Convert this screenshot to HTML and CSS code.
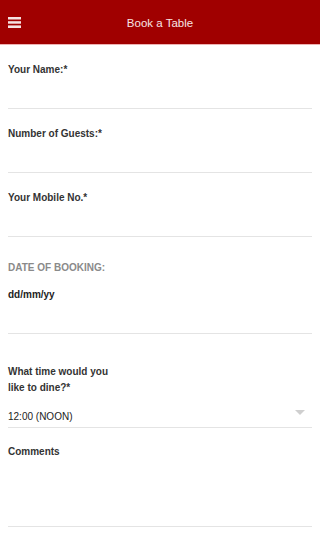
FILE: index.html
```html
<!DOCTYPE html>
<html lang="en">
<head>
<meta charset="utf-8">
<title>Book a Table</title>
<link rel="stylesheet" href="styles.css">
</head>
<body>
<header class="topbar">
  <div class="menu-cell">
    <svg class="menu-icon" width="13" height="11" viewBox="0 0 13 11" aria-hidden="true">
      <rect x="0" y="0" width="13" height="2.5" fill="#f6e2e2"/>
      <rect x="0" y="4.2" width="13" height="2.5" fill="#f6e2e2"/>
      <rect x="0" y="8.4" width="13" height="2.6" fill="#f6e2e2"/>
    </svg>
  </div>
  <h1 class="title">Book a Table</h1>
  <div class="spacer"></div>
</header>

<form class="form">
  <div class="field">
    <label class="label">Your Name:*</label>
    <div class="input"></div>
  </div>
  <div class="field">
    <label class="label">Number of Guests:*</label>
    <div class="input"></div>
  </div>
  <div class="field">
    <label class="label">Your Mobile No.*</label>
    <div class="input"></div>
  </div>
  <div class="field field-date">
    <label class="label label-muted">DATE OF BOOKING:</label>
    <div class="date-value">dd/mm/yy</div>
  </div>
  <div class="field field-time">
    <label class="label label-wrap">What time would you like to dine?*</label>
    <div class="select">
      <span class="select-text">12:00 (NOON)</span>
      <span class="caret"></span>
    </div>
  </div>
  <div class="field field-comments">
    <label class="label">Comments</label>
    <div class="textarea"></div>
  </div>
</form>
</body>
</html>
```

FILE: styles.css
```css
* {
  box-sizing: border-box;
}

html, body {
  margin: 0;
  padding: 0;
  background: #ffffff;
}

body {
  font-family: "Liberation Sans", Arial, Helvetica, sans-serif;
  color: #333333;
}

.topbar {
  display: grid;
  grid-template-columns: 1fr auto 1fr;
  align-items: center;
  height: 45px;
  background: #a00000;
  border-bottom: 1px solid #eeb2b2;
}

.menu-cell {
  display: flex;
  align-items: center;
  padding-left: 8px;
  padding-top: 1px;
}

.menu-icon {
  display: block;
}

.title {
  margin: 0;
  font-size: 11.5px;
  font-weight: normal;
  line-height: 14px;
  color: #f8e4e4;
  padding-top: 1px;
}

.form {
  padding: 0 8px;
}

.field {
  border-bottom: 1px solid #e4e4e4;
  padding-top: 18px;
}

.label {
  display: block;
  font-size: 10px;
  font-weight: bold;
  line-height: 14px;
  color: #333333;
}

.input {
  height: 31px;
}

.field-date {
  padding-top: 24px;
  padding-bottom: 31px;
}

.label-muted {
  color: #8a8a8a;
}

.date-value {
  margin-top: 13px;
  font-size: 10px;
  font-weight: bold;
  line-height: 14px;
  color: #222222;
}

.field-time {
  padding-top: 30px;
}

.label-wrap {
  max-width: 112px;
  line-height: 16px;
}

.select {
  display: flex;
  justify-content: space-between;
  align-items: flex-start;
  margin-top: 14px;
  height: 17px;
}

.select-text {
  font-size: 10px;
  line-height: 14px;
  color: #222222;
}

.caret {
  width: 0;
  height: 0;
  margin-right: 7px;
  border-left: 5px solid transparent;
  border-right: 5px solid transparent;
  border-top: 5px solid #cfcfcf;
}

.field-comments {
  padding-top: 17px;
}

.textarea {
  height: 67px;
}
```
